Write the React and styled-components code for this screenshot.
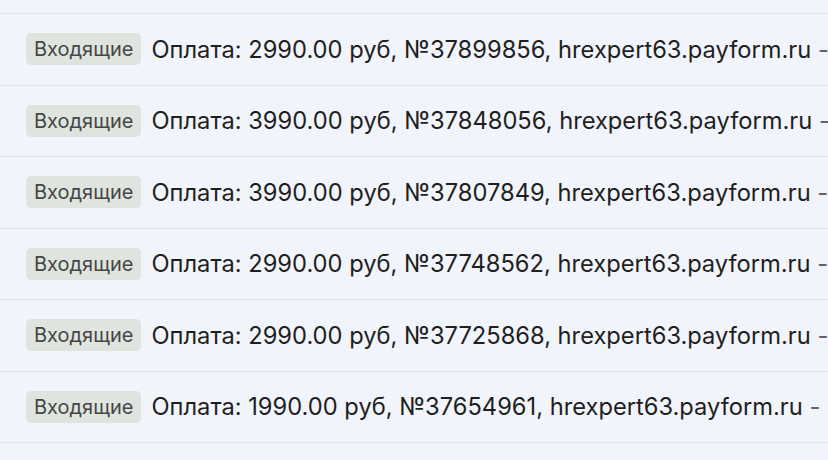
import React from "react";
import styled, { createGlobalStyle } from "styled-components";

const GlobalStyle = createGlobalStyle`
  html, body {
    margin: 0;
    padding: 0;
    background: #f1f4fa;
    overflow: hidden;
  }
`;

const List = styled.div`
  width: 828px;
  height: 460px;
  overflow: hidden;
  background: #f1f4fa;
  font-family: Inter, Roboto, "Noto Sans", sans-serif;
`;

const TopStrip = styled.div`
  height: 13px;
  border-bottom: 1px solid #dfe3eb;
`;

const Row = styled.div`
  display: flex;
  align-items: center;
  gap: 10px;
  height: 70.5px;
  padding-left: 26px;
  border-bottom: 1px solid #dfe3eb;
  white-space: nowrap;
  overflow: hidden;
`;

const Badge = styled.span`
  display: inline-flex;
  align-items: center;
  height: 32px;
  padding: 0 8px;
  border-radius: 5px;
  background: #e0e4df;
  color: #444746;
  font-size: 20px;
  flex: none;
`;

const Subject = styled.span`
  color: #1f1f1f;
  font-size: 23.7px;
`;

const Tail = styled.span`
  color: #5f6368;
`;

const rows = [
  { sum: "2990.00", num: "37899856" },
  { sum: "3990.00", num: "37848056" },
  { sum: "3990.00", num: "37807849" },
  { sum: "2990.00", num: "37748562" },
  { sum: "2990.00", num: "37725868" },
  { sum: "1990.00", num: "37654961" },
];

export default function App() {
  return (
    <>
      <GlobalStyle />
      <List>
        <TopStrip />
        {rows.map((r) => (
          <Row key={r.num}>
            <Badge>Входящие</Badge>
            <Subject>
              Оплата: {r.sum} руб, №{r.num}, hrexpert63.payform.ru{" "}
              <Tail>-</Tail>
            </Subject>
          </Row>
        ))}
      </List>
    </>
  );
}
